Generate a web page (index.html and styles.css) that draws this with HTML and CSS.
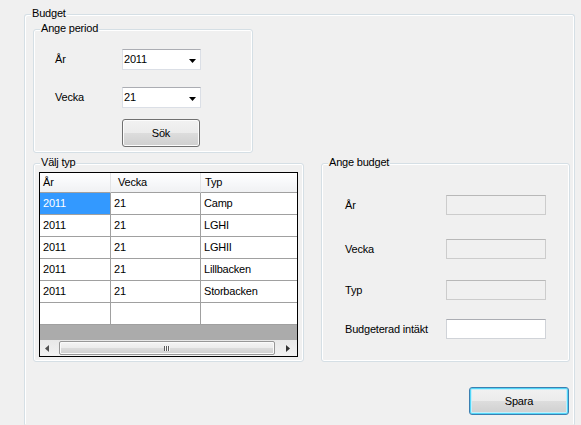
FILE: index.html
```html
<!DOCTYPE html>
<html lang="sv">
<head>
<meta charset="utf-8">
<title>Budget</title>
<link rel="stylesheet" href="styles.css">
</head>
<body>
<div class="group g-budget">
  <span class="legend">Budget</span>
  <div class="group g-period">
    <span class="legend">Ange period</span>
    <div class="period-body">
      <div class="frow r1">
        <span class="lbl">År</span>
        <div class="combo"><span>2011</span><svg class="drop" width="7" height="4" viewBox="0 0 7 4"><path d="M0 0H7L3.5 4Z" fill="#000"/></svg></div>
      </div>
      <div class="frow r2">
        <span class="lbl">Vecka</span>
        <div class="combo"><span>21</span><svg class="drop" width="7" height="4" viewBox="0 0 7 4"><path d="M0 0H7L3.5 4Z" fill="#000"/></svg></div>
      </div>
      <div class="frow r3">
        <button class="btn sok">Sök</button>
      </div>
    </div>
  </div>
  <div class="row2">
    <div class="group g-typ">
      <span class="legend">Välj typ</span>
      <div class="dgv">
        <div class="dgv-table">
          <div class="hc h1">År</div><div class="hc h2">Vecka</div><div class="hc h3">Typ</div>
          <div class="c c1 sel">2011</div><div class="c c2">21</div><div class="c c3">Camp</div>
          <div class="c c1">2011</div><div class="c c2">21</div><div class="c c3">LGHI</div>
          <div class="c c1">2011</div><div class="c c2">21</div><div class="c c3">LGHII</div>
          <div class="c c1">2011</div><div class="c c2">21</div><div class="c c3">Lillbacken</div>
          <div class="c c1">2011</div><div class="c c2">21</div><div class="c c3">Storbacken</div>
          <div class="c c1"></div><div class="c c2"></div><div class="c c3"></div>
        </div>
        <div class="dgv-fill"></div>
        <div class="hscroll">
          <div class="sb-btn sb-left"><svg width="4" height="7" viewBox="0 0 4 7"><path d="M4 0V7L0 3.5Z" fill="#505050"/></svg></div>
          <div class="sb-track"><div class="thumb"><svg width="6" height="5" viewBox="0 0 6 5"><rect x="0" y="0" width="1" height="5" fill="#5c5c5c"/><rect x="2" y="0" width="1" height="5" fill="#5c5c5c"/><rect x="4" y="0" width="1" height="5" fill="#5c5c5c"/><rect x="1" y="0" width="1" height="5" fill="#fafafa"/><rect x="3" y="0" width="1" height="5" fill="#fafafa"/><rect x="5" y="0" width="1" height="5" fill="#fafafa"/></svg></div></div>
          <div class="sb-btn sb-right"><svg width="4" height="7" viewBox="0 0 4 7"><path d="M0 0V7L4 3.5Z" fill="#303030"/></svg></div>
        </div>
      </div>
    </div>
    <div class="group g-ange">
      <span class="legend">Ange budget</span>
      <div class="ange-body">
        <div class="frow a1"><span class="lbl">År</span><div class="tb dis"></div></div>
        <div class="frow a2"><span class="lbl">Vecka</span><div class="tb dis"></div></div>
        <div class="frow a3"><span class="lbl">Typ</span><div class="tb dis"></div></div>
        <div class="frow a4"><span class="lbl">Budgeterad intäkt</span><div class="tb"></div></div>
      </div>
    </div>
  </div>
  <div class="actions">
    <button class="btn spara">Spara</button>
  </div>
</div>
</body>
</html>
```

FILE: styles.css
```css
html, body {
  margin: 0;
  padding: 0;
}

body {
  width: 581px;
  height: 425px;
  overflow: hidden;
  background: #f0f0f0;
  font-family: "Liberation Sans", Arial, sans-serif;
  font-size: 11px;
  line-height: 13px;
  letter-spacing: -0.2px;
  color: #000;
}

/* group boxes */
.group {
  box-sizing: border-box;
  border: 1px solid #d5dfe5;
  border-radius: 3px;
  box-shadow: inset 0 0 0 1px #ffffff;
}

.legend {
  display: block;
  width: max-content;
  margin: -8px 0 0 6px;
  padding: 0 1px;
  background: #f0f0f0;
  line-height: 13px;
}

.g-budget {
  margin: 14px 0 0 24px;
  width: 551px;
  height: 411px;
  border-bottom-color: transparent;
  border-bottom-left-radius: 0;
  border-bottom-right-radius: 0;
  box-shadow: inset 1px 1px 0 #ffffff, inset -1px 0 0 #ffffff;
}

.g-period {
  margin: 9px 0 0 8px;
  width: 220px;
  height: 124px;
}

.period-body {
  padding-left: 21px;
}

.frow {
  display: flex;
  align-items: center;
}

.period-body .lbl {
  width: 67px;
}

.r1 { margin-top: 14px; }
.r2 { margin-top: 17px; }
.r3 { margin-top: 11px; }

.combo {
  box-sizing: border-box;
  width: 79px;
  height: 21px;
  background: #fff;
  border: 1px solid #dbdfe6;
  border-top-color: #abadb3;
  display: flex;
  align-items: center;
  justify-content: space-between;
  padding: 0 4px 0 1px;
}

.drop {
  display: block;
  margin-top: 2px;
}

/* buttons */
.btn {
  box-sizing: border-box;
  font: inherit;
  letter-spacing: inherit;
  color: #000;
  border: 1px solid #707070;
  border-radius: 3px;
  background: linear-gradient(#f2f2f2 0%, #ebebeb 50%, #dddddd 50%, #cfcfcf 100%);
  box-shadow: inset 0 0 0 1px #fcfcfc;
  padding: 0;
  text-align: center;
}

.sok {
  width: 78px;
  height: 28px;
  margin-left: 67px;
}

.spara {
  width: 100px;
  height: 28px;
  border-color: #3c7fb1;
  box-shadow: inset 0 0 0 1px #52d6f7, inset 0 0 0 2px #c4eefb;
}

/* second row */
.row2 {
  display: flex;
  gap: 17px;
  margin: 10px 0 0 8px;
}

.g-typ {
  width: 271px;
  height: 199px;
}

.g-ange {
  width: 249px;
  height: 199px;
}

/* data grid */
.dgv {
  box-sizing: border-box;
  margin: 3px 0 0 5px;
  width: 259px;
  height: 185px;
  border: 1px solid #000;
  background: #ababab;
  display: flex;
  flex-direction: column;
}

.dgv-table {
  display: grid;
  grid-template-columns: 71px 90px 96px;
  background: #fff;
}

.hc {
  box-sizing: border-box;
  height: 20px;
  display: flex;
  align-items: center;
  border-bottom: 1px solid #a0a0a0;
  background: linear-gradient(#ffffff 0%, #f7f8fa 50%, #f0f1f3 100%);
}

.h1 { padding-left: 3px; border-right: 1px solid #e2e3e5; }
.h2 { padding-left: 7px; border-right: 1px solid #e2e3e5; }
.h3 { padding-left: 4px; }

.c {
  box-sizing: border-box;
  height: 22px;
  display: flex;
  align-items: center;
  padding-left: 3px;
  border-bottom: 1px solid #a0a0a0;
}

.c1, .c2 {
  border-right: 1px solid #a0a0a0;
}

.sel {
  background: #3399ff;
  color: #fff;
}

.dgv-fill {
  flex: 1;
}

.hscroll {
  height: 16px;
  display: grid;
  grid-template-columns: 18px 1fr 21px;
  background: linear-gradient(#e8e8e8, #f2f2f2);
}

.sb-btn {
  display: flex;
  align-items: center;
}

.sb-left { padding-left: 5px; }
.sb-right { padding-left: 10px; }

.sb-track {
  display: flex;
  padding: 1px;
}

.thumb {
  box-sizing: border-box;
  flex: 1;
  border: 1px solid #979797;
  border-radius: 2px;
  background: linear-gradient(#f4f4f4 0%, #ebebeb 50%, #dcdcdc 50%, #d0d0d0 100%);
  box-shadow: inset 0 0 0 1px #fafafa;
  display: flex;
  align-items: center;
  justify-content: center;
}

.thumb svg { display: block; }

/* ange budget */
.ange-body {
  padding-left: 23px;
}

.ange-body .lbl {
  width: 101px;
  white-space: nowrap;
}

.a1 { margin-top: 26px; }
.a2 { margin-top: 24px; }
.a3 { margin-top: 21px; }
.a4 { margin-top: 19px; }

.tb {
  box-sizing: border-box;
  width: 100px;
  height: 20px;
  background: #fff;
  border: 1px solid #d0d3d8;
  border-top-color: #abadb3;
}

.tb.dis {
  background: #f0f0f0;
  border-color: #cccccc;
  border-top-color: #b8b8b8;
}

/* bottom actions */
.actions {
  display: flex;
  justify-content: flex-end;
  margin-top: 25px;
  padding-right: 5px;
}
```
